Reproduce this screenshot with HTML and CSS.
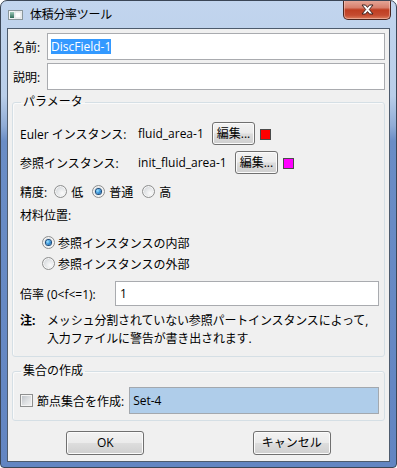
FILE: index.html
```html
<!DOCTYPE html>
<html lang="ja">
<head>
<meta charset="utf-8">
<title>体積分率ツール</title>
<link rel="stylesheet" href="styles.css">
</head>
<body>
<div class="window">
  <div class="titlebar">
    <svg class="app-icon" width="15" height="10" viewBox="0 0 15 10">
      <defs>
        <linearGradient id="ig" x1="0" y1="0" x2="0" y2="1">
          <stop offset="0" stop-color="#9cc9b8"/>
          <stop offset="1" stop-color="#2f6b58"/>
        </linearGradient>
      </defs>
      <rect x="0.5" y="0.5" width="14" height="9" fill="#f3f5f6" stroke="#8a979c"/>
      <rect x="2" y="2" width="4" height="6" fill="url(#ig)"/>
      <rect x="7" y="2" width="6" height="6" fill="#fdfdfd" stroke="#c9d0d4" stroke-width="0.6"/>
    </svg>
    <span class="title">体積分率ツール</span>
    <div class="close">
      <svg width="13" height="11" viewBox="0 0 13 11">
        <path d="M1 1 L4.5 1 L6.5 3.4 L8.5 1 L12 1 L8.3 5.5 L12 10 L8.5 10 L6.5 7.6 L4.5 10 L1 10 L4.7 5.5 Z" fill="#fff" stroke="#3d2320" stroke-width="1" stroke-linejoin="round"/>
      </svg>
    </div>
  </div>

  <div class="client">
    <div class="field-row">
      <span class="field-label">名前:</span>
      <div class="textbox"><span class="selected">DiscField-1</span></div>
    </div>
    <div class="field-row">
      <span class="field-label">説明:</span>
      <div class="textbox"></div>
    </div>

    <fieldset class="group params">
      <legend>パラメータ</legend>
      <div class="inst-row row1">
        <span class="inst-label">Euler インスタンス:</span>
        <span class="inst-value">fluid_area-1</span>
        <button class="btn btn-edit">編集...</button>
        <span class="swatch swatch-red"></span>
      </div>
      <div class="inst-row row2">
        <span class="inst-label">参照インスタンス:</span>
        <span class="inst-value">init_fluid_area-1</span>
        <button class="btn btn-edit">編集...</button>
        <span class="swatch swatch-magenta"></span>
      </div>
      <div class="precision-row">
        <span class="precision-label">精度:</span>
        <div class="radio-group">
          <span class="radio"><span class="radio-mark"></span><span>低</span></span>
          <span class="radio"><span class="radio-mark checked"></span><span>普通</span></span>
          <span class="radio"><span class="radio-mark"></span><span>高</span></span>
        </div>
      </div>
      <div class="material-label">材料位置:</div>
      <div class="material-option opt1"><span class="radio-mark checked"></span><span>参照インスタンスの内部</span></div>
      <div class="material-option opt2"><span class="radio-mark"></span><span>参照インスタンスの外部</span></div>
      <div class="ratio-row">
        <span class="ratio-label">倍率 (0&lt;f&lt;=1):</span>
        <div class="textbox ratio-input">1</div>
      </div>
      <div class="note">
        <span class="note-key">注:</span>
        <span class="note-text">メッシュ分割されていない参照パートインスタンスによって,<br>入力ファイルに警告が書き出されます.</span>
      </div>
    </fieldset>

    <fieldset class="group sets">
      <legend>集合の作成</legend>
      <div class="set-row">
        <span class="checkbox"></span>
        <span class="set-label">節点集合を作成:</span>
        <div class="textbox set-input">Set-4</div>
      </div>
    </fieldset>

    <div class="buttons">
      <button class="btn btn-main">OK</button>
      <button class="btn btn-main">キャンセル</button>
    </div>
  </div>
</div>
</body>
</html>
```
FILE: styles.css
```css
html, body {
  margin: 0;
  background: #ffffff;
}

body {
  font-family: "Open Sans", "Noto Sans CJK JP", sans-serif;
  font-size: 12px;
  color: #000;
}

.window {
  width: 397px;
  height: 468px;
  box-sizing: border-box;
  border: 1px solid #3b4656;
  border-radius: 7px 7px 4px 4px;
  background: linear-gradient(180deg, #c2d5ee 0px, #b9cee9 95px, #90acd6 125px, #6a8dc6 140px, #6285c2 100%);
  display: flex;
  flex-direction: column;
  overflow: hidden;
}

.titlebar {
  height: 27px;
  flex: none;
  display: flex;
  align-items: flex-start;
}

.app-icon {
  margin: 9px 0 0 7px;
  flex: none;
}

.title {
  margin: 5px 0 0 7px;
  line-height: 16px;
  font-family: "Noto Sans CJK JP", sans-serif;
  letter-spacing: -0.3px;
}

.close {
  margin: -1px 5px 0 auto;
  width: 48px;
  height: 20px;
  box-sizing: border-box;
  border: 1px solid #4a2620;
  border-top: none;
  border-radius: 0 0 5px 5px;
  background: linear-gradient(180deg, #e6aa9c 0%, #d7806d 40%, #bf3e22 52%, #c54b30 80%, #dc7e5e 100%);
  box-shadow: inset 0 0 0 1px rgba(255, 220, 210, 0.45);
  display: flex;
  align-items: center;
  justify-content: center;
}

.client {
  flex: 1;
  margin: 0 6px 5px;
  border: 1px solid #4d5b6d;
  background: #f0f0f0;
  padding: 4px 4px 6px;
  display: flex;
  flex-direction: column;
}

.field-row {
  display: flex;
  align-items: center;
  height: 27px;
}

.field-row + .field-row {
  margin-top: 3px;
}

.field-label {
  width: 34px;
  padding-left: 1px;
  flex: none;
}

.textbox {
  flex: 1;
  height: 27px;
  box-sizing: border-box;
  border: 1px solid #a9abaf;
  background: #fff;
  padding: 0 3px;
  display: flex;
  align-items: center;
}

.selected {
  background: #3399ff;
  color: #fff;
  line-height: 15px;
}

.group {
  margin: 4px 0 0;
  padding: 12px 5px 8px 7px;
  border: 1px solid #d5dfe5;
  border-radius: 3px;
  min-width: 0;
  box-shadow: inset 1px 1px 0 #fafafa;
}

.group legend {
  padding: 0 2px;
  margin-left: 1px;
  line-height: 16px;
  height: 16px;
}

.inst-row {
  display: flex;
  align-items: center;
  height: 23px;
}

.row2 {
  margin-top: 6px;
}

.inst-label {
  width: 118px;
  flex: none;
}

.inst-value {
  margin-right: 8px;
}

.btn {
  font: inherit;
  color: #000;
  border: 1px solid #707070;
  border-radius: 3px;
  background: linear-gradient(180deg, #f2f2f2 0%, #ebebeb 48%, #dddddd 52%, #cfcfcf 100%);
  box-shadow: inset 0 0 0 1px #fbfbfb;
  padding: 0;
  line-height: 16px;
}

.btn-edit {
  height: 23px;
  padding: 0 4px;
}

.swatch {
  width: 11px;
  height: 11px;
  box-sizing: border-box;
  border: 1px solid #4a4a4a;
  margin-left: 5px;
  margin-top: 1px;
}

.swatch-red {
  background: #ff0000;
}

.swatch-magenta {
  background: #ff00ff;
}

.precision-row {
  display: flex;
  align-items: center;
  height: 23px;
  margin-top: 6px;
}

.radio-group {
  display: flex;
  align-items: center;
  gap: 9px;
  margin-left: 7px;
}

.radio {
  display: inline-flex;
  align-items: center;
  gap: 4px;
}

.radio-mark {
  width: 13px;
  height: 13px;
  box-sizing: border-box;
  border-radius: 50%;
  border: 1px solid #8e8f8f;
  background: radial-gradient(circle at 65% 65%, #fbfbfb 0%, #e4e6e8 45%, #c7cbd0 100%);
  box-shadow: inset 0 0 0 1px #f6f6f6;
  display: flex;
  align-items: center;
  justify-content: center;
  flex: none;
}

.radio-mark.checked::after {
  content: "";
  width: 5px;
  height: 5px;
  border-radius: 50%;
  background: radial-gradient(circle at 35% 35%, #a6e6ff 0%, #3c9be0 45%, #0f4f8f 100%);
  box-shadow: 0 0 0 1px #1c4b7a;
}

.material-label {
  height: 22px;
  line-height: 22px;
  margin-top: 2px;
}

.material-option {
  display: flex;
  align-items: center;
  gap: 3px;
  height: 21px;
  margin-left: 22px;
}

.opt1 {
  margin-top: 5px;
}

.ratio-row {
  display: flex;
  align-items: center;
  margin-top: 7px;
}

.ratio-label {
  width: 95px;
  flex: none;
}

.ratio-input {
  height: 25px;
  padding-left: 4px;
}

.note {
  display: flex;
  line-height: 18px;
  margin-top: 6px;
  white-space: nowrap;
}

.note-key {
  width: 27px;
  flex: none;
  font-weight: bold;
}

.note-text {
  letter-spacing: -0.15px;
}

.sets {
  margin-top: 6px;
  padding: 8px 5px 6px 7px;
}

.set-row {
  display: flex;
  align-items: center;
  height: 27px;
}

.checkbox {
  width: 13px;
  height: 13px;
  box-sizing: border-box;
  border: 1px solid #8e8f8f;
  background: linear-gradient(135deg, #b9bec4 0%, #dfe1e3 55%, #f4f4f4 100%);
  box-shadow: inset 0 0 0 1px #f4f4f4;
  flex: none;
}

.set-label {
  margin-left: 4px;
  flex: none;
}

.set-input {
  margin-left: 5px;
  background: #afcdea;
  border-color: #a3a8ae;
}

.buttons {
  display: grid;
  grid-template-columns: 1fr 1fr;
  justify-items: center;
  margin-top: 10px;
}

.btn-main {
  width: 78px;
  height: 24px;
}
```
